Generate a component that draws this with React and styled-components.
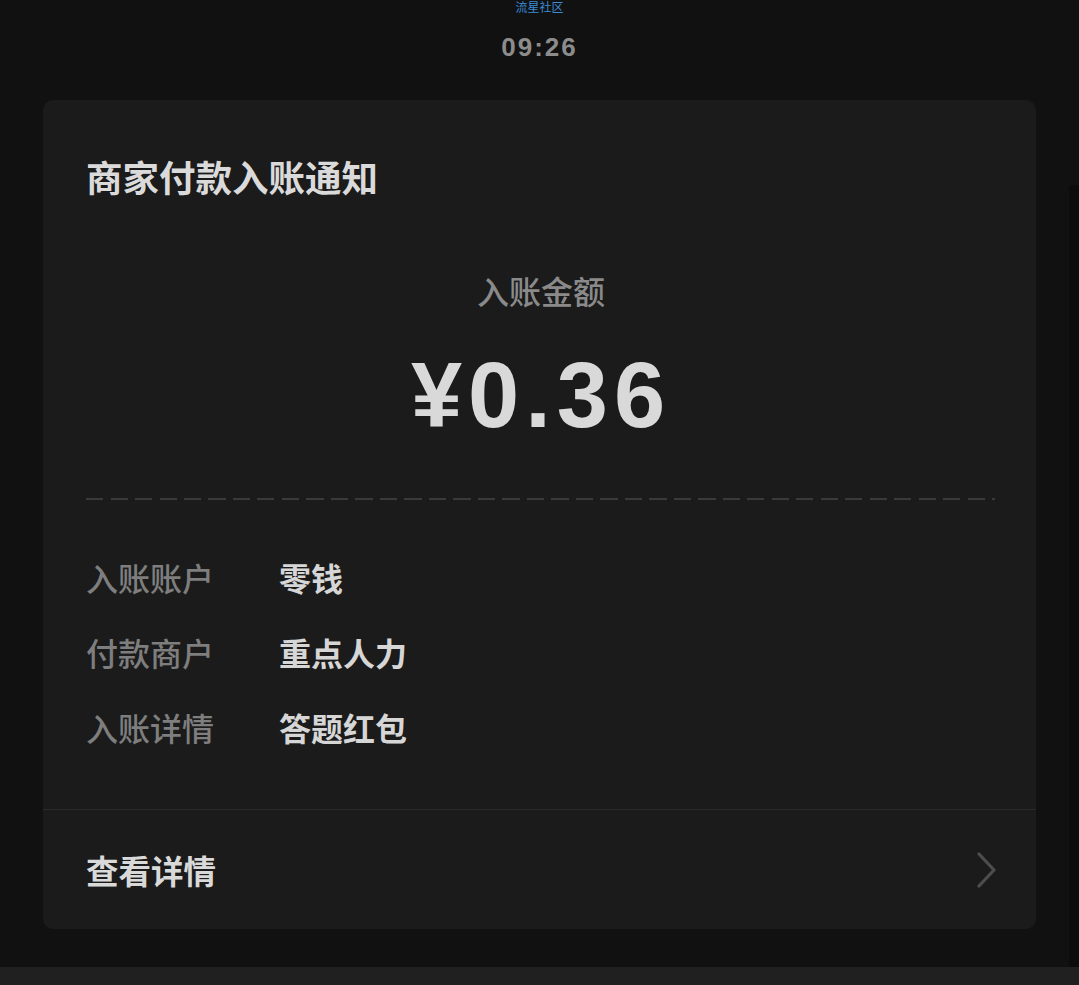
import React from 'react'
import styled, { createGlobalStyle } from 'styled-components'

const GlobalStyle = createGlobalStyle`
    html, body {
        margin: 0;
        padding: 0;
        background: #111111;
    }
    body {
        font-family: "Noto Sans CJK SC", "Noto Sans", sans-serif;
    }
`;

const Page = styled.div`
    position: relative;
    width: 1079px;
    min-height: 985px;
    background: #111111;
    display: flex;
    flex-direction: column;
`;

const ScrollTrack = styled.div`
    position: absolute;
    right: 0;
    top: 185px;
    width: 10px;
    height: 782px;
    background: #0c0c0c;
`;

const Header = styled.div`
    display: flex;
    flex-direction: column;
    align-items: center;
    height: 100px;
`;

const Source = styled.div`
    font-size: 12px;
    line-height: 13px;
    color: #3b8ad4;
`;

const Clock = styled.div`
    margin-top: 20px;
    font-family: "Liberation Sans", Arial, sans-serif;
    font-weight: bold;
    font-size: 26px;
    line-height: 28px;
    letter-spacing: 2px;
    color: #8c8c8c;
`;

const Card = styled.div`
    margin: 0 43px;
    background: #1b1b1b;
    border-radius: 10px;
    display: flex;
    flex-direction: column;
`;

const Body = styled.div`
    padding: 52px 41px 60px 44px;
    display: flex;
    flex-direction: column;
`;

const Title = styled.div`
    margin-left: -1px;
    font-size: 36.5px;
    line-height: 50px;
    font-weight: bold;
    color: #dadada;
`;

const AmountLabel = styled.div`
    margin-top: 66px;
    text-align: center;
    font-size: 32px;
    line-height: 44px;
    font-weight: 500;
    color: #8a8a8a;
`;

const Amount = styled.div`
    margin-top: 37px;
    text-align: center;
    font-family: "Liberation Sans", Arial, sans-serif;
    font-weight: bold;
    font-size: 92px;
    line-height: 92px;
    letter-spacing: 6px;
    color: #d9d9d9;
`;

const Dashed = styled.div`
    margin-top: 57px;
    margin-left: -1px;
    height: 2px;
    background: repeating-linear-gradient(
        to right,
        #3a3a3a 0,
        #3a3a3a 17px,
        transparent 17px,
        transparent 24.5px
    );
`;

const Rows = styled.div`
    margin-top: 55px;
    display: flex;
    flex-direction: column;
    gap: 31px;
`;

const Row = styled.div`
    display: flex;
    align-items: center;
    font-size: 32px;
    line-height: 44px;
`;

const Label = styled.span`
    width: 192px;
    margin-left: -1px;
    font-weight: 500;
    color: #7e7e7e;
`;

const Value = styled.span`
    margin-left: 1px;
    color: #d6d6d6;
    font-weight: bold;
`;

const Footer = styled.div`
    height: 119px;
    border-top: 1px solid #2a2a2a;
    display: flex;
    align-items: center;
    justify-content: space-between;
    padding: 0 38px 0 43px;
`;

const FooterText = styled.span`
    font-size: 32.5px;
    line-height: 44px;
    font-weight: bold;
    color: #d9d9d9;
`;

const BottomBar = styled.div`
    margin-top: 38px;
    height: 18px;
    background: #202020;
`;

const Chevron = () => (
    <svg width="22" height="36" viewBox="0 0 22 36">
        <path d="M3 2 L18 18 L3 34" fill="none" stroke="#4d4d4d" strokeWidth="3.2" strokeLinecap="round" strokeLinejoin="round" />
    </svg>
);

const details = [
    ['入账账户', '零钱'],
    ['付款商户', '重点人力'],
    ['入账详情', '答题红包'],
];

export default function App() {
    return (
        <Page>
            <GlobalStyle />
            <ScrollTrack />
            <Header>
                <Source>流星社区</Source>
                <Clock>09:26</Clock>
            </Header>
            <Card>
                <Body>
                    <Title>商家付款入账通知</Title>
                    <AmountLabel>入账金额</AmountLabel>
                    <Amount>¥0.36</Amount>
                    <Dashed />
                    <Rows>
                        {details.map(([label, value]) => (
                            <Row key={label}>
                                <Label>{label}</Label>
                                <Value>{value}</Value>
                            </Row>
                        ))}
                    </Rows>
                </Body>
                <Footer>
                    <FooterText>查看详情</FooterText>
                    <Chevron />
                </Footer>
            </Card>
            <BottomBar />
        </Page>
    )
}
